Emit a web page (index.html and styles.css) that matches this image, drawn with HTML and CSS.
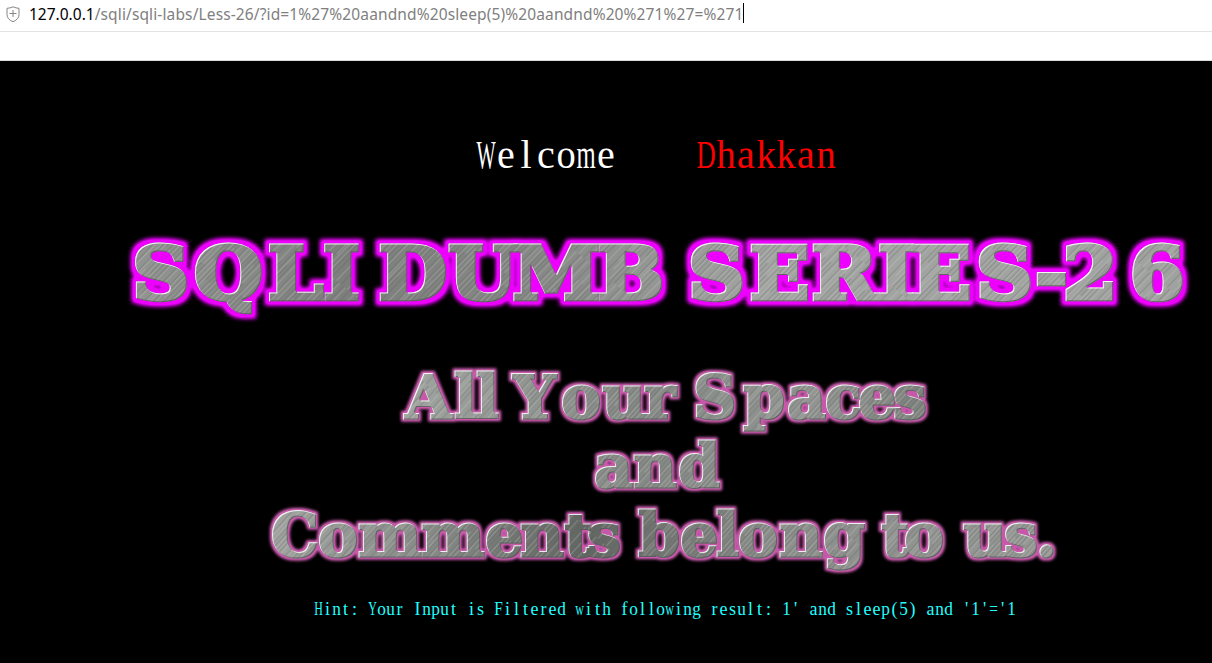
FILE: index.html
```html
<!DOCTYPE html>
<html lang="en">
<head>
<meta charset="utf-8">
<title>Less-26</title>
<link rel="stylesheet" href="styles.css">
</head>
<body>
<header class="address">
  <svg class="shield" viewBox="0 0 14 17" width="14" height="17"><path d="M7 .8 Q10 2.2 13 2.3 V8.5 Q13 13.3 7 15.7 Q1 13.3 1 8.5 V2.3 Q4 2.2 7 .8Z M3.5 7.5 H10.5 M7 4 V11"/></svg>
  <div class="url"><span class="host">127.0.0.1</span><span class="path">/sqli/sqli-labs/Less-26/?id=1%27%20aandnd%20sleep(5)%20aandnd%20%271%27=%271</span></div>
  <i class="caret"></i>
</header>
<div class="toolbar"></div>
<main class="page">
<svg class="art" viewBox="0 61 1212 602" width="1212" height="602">
  <defs>
    <pattern id="scratches" width="31" height="170" patternUnits="userSpaceOnUse" patternTransform="rotate(42) scale(.8 1)">
      <path class="lit" d="M2 0V90M6 40V150M11 0V60M14 80V170M19 20V120M24 0V70M28 60V170M9 110V160"/>
      <path class="dim" d="M4 20V170M8 0V80M12.500 60V140M17 0V110M21 70V170M26 20V130M30 0V60M16 130V170"/>
    </pattern>
    <linearGradient id="steelA" gradientUnits="userSpaceOnUse" x1="125" y1="0" x2="1102" y2="0">
      <stop offset="0" stop-color="#929492"/><stop offset=".2" stop-color="#7d7f7d"/><stop offset=".38" stop-color="#868886"/><stop offset=".6" stop-color="#a3a5a3"/><stop offset="1" stop-color="#a0a2a0"/>
    </linearGradient>
    <linearGradient id="steelB" gradientUnits="userSpaceOnUse" x1="403" y1="0" x2="927" y2="0">
      <stop offset="0" stop-color="#a0a4a0"/><stop offset=".45" stop-color="#858985"/><stop offset=".6" stop-color="#8b8f8b"/><stop offset=".78" stop-color="#929592"/><stop offset="1" stop-color="#7d817d"/>
    </linearGradient>
    <linearGradient id="steelC" gradientUnits="userSpaceOnUse" x1="272" y1="0" x2="1055" y2="0">
      <stop offset="0" stop-color="#a0a3a0"/><stop offset=".2" stop-color="#878b87"/><stop offset=".4" stop-color="#626662"/><stop offset=".65" stop-color="#8b8e8b"/><stop offset="1" stop-color="#959895"/>
    </linearGradient>
    <pattern id="metalA" width="1212" height="663" patternUnits="userSpaceOnUse"><rect width="1212" height="663" fill="url(#steelA)"/><rect width="1212" height="663" fill="url(#scratches)"/></pattern>
    <pattern id="metalB" width="1212" height="663" patternUnits="userSpaceOnUse"><rect width="1212" height="663" fill="url(#steelB)"/><rect width="1212" height="663" fill="url(#scratches)"/></pattern>
    <pattern id="metalC" width="1212" height="663" patternUnits="userSpaceOnUse"><rect width="1212" height="663" fill="url(#steelC)"/><rect width="1212" height="663" fill="url(#scratches)"/></pattern>
    <filter id="neon" filterUnits="userSpaceOnUse" x="100" y="210" width="1112" height="140" color-interpolation-filters="sRGB">
      <feMorphology in="SourceAlpha" operator="dilate" radius="3.500" result="fat"/>
      <feGaussianBlur in="fat" stdDeviation="2.200" result="halo"/>
      <feComponentTransfer in="halo" result="strong"><feFuncA type="linear" slope="1.350"/></feComponentTransfer>
      <feFlood flood-color="#ee00ff"/><feComposite in2="strong" operator="in" result="glow"/>
      <feOffset in="SourceAlpha" dx="1" dy="1" result="down"/><feFlood flood-color="#fff" flood-opacity=".9"/><feComposite in2="SourceAlpha" operator="in"/><feComposite in2="down" operator="out" result="light"/>
      <feOffset in="SourceAlpha" dx="-1" dy="-1" result="up"/><feFlood flood-color="#555" flood-opacity=".8"/><feComposite in2="SourceAlpha" operator="in"/><feComposite in2="up" operator="out" result="shade"/>
      <feMerge><feMergeNode in="glow"/><feMergeNode in="SourceGraphic"/><feMergeNode in="shade"/><feMergeNode in="light"/></feMerge>
    </filter>
    <filter id="rose" filterUnits="userSpaceOnUse" x="240" y="350" width="850" height="240" color-interpolation-filters="sRGB">
      <feMorphology in="SourceAlpha" operator="dilate" radius="2" result="fat"/>
      <feGaussianBlur in="fat" stdDeviation="1.500" result="halo"/>
      <feComponentTransfer in="halo" result="strong"><feFuncA type="linear" slope="1.200"/></feComponentTransfer>
      <feFlood flood-color="#c758aa"/><feComposite in2="strong" operator="in" result="glow"/>
      <feOffset in="SourceAlpha" dx="1" dy="1" result="down"/><feFlood flood-color="#fff" flood-opacity=".85"/><feComposite in2="SourceAlpha" operator="in"/><feComposite in2="down" operator="out" result="light"/>
      <feOffset in="SourceAlpha" dx="-1" dy="-1" result="up"/><feFlood flood-color="#555" flood-opacity=".8"/><feComposite in2="SourceAlpha" operator="in"/><feComposite in2="up" operator="out" result="shade"/>
      <feMerge><feMergeNode in="glow"/><feMergeNode in="SourceGraphic"/><feMergeNode in="shade"/><feMergeNode in="light"/></feMerge>
    </filter>
  </defs>
  <text class="greet" y="168" data-start="476" data-cell="20">Welcome</text>
  <text class="greet name" y="168" data-start="696" data-cell="20">Dhakkan</text>
  <g class="title" filter="url(#neon)">
    <g transform="scale(1.08 1)">
      <text y="299.500" x="122.5 179.600 248 299">SQLI</text>
      <text y="299.500" x="350.500 415 474.500 553">DUMB</text>
      <text y="299.500" x="637 694 751.500 813 843.500 903.700 958.300 984 1046">SERIES-26</text>
    </g>
  </g>
  <g class="motto" filter="url(#rose)">
    <text y="418" x="405 454 476">All</text>
    <text y="418" x="513 561 602 644">Your</text>
    <text y="418" x="693 743 787 825 858 893">Spaces</text>
    <text y="487" x="594 633 678">and</text>
    <g class="last">
      <text y="556" x="271 318 358 421 485 520 564 587">Comments</text>
      <text y="556" x="638 680 716 738 779 823">belong</text>
      <text y="556" x="881 904">to</text>
      <text y="556" x="963 1004 1036">us.</text>
    </g>
  </g>
  <text class="hint" y="615" data-start="314" data-cell="9">Hint: Your Input is Filtered with following result: 1' and sleep(5) and '1'='1</text>
</svg>
</main>
<script src="cells.js"></script>
</body>
</html>
```
FILE: styles.css
```css
body { margin: 0; height: 663px; overflow: hidden; display: flex; flex-direction: column; background: #000; }
.address { box-sizing: border-box; height: 32px; flex: none; display: flex; align-items: flex-start; padding: 3px 0 0 6px; background: #fff; border-bottom: 1px solid #e3e3e3; }
.shield { margin: 3px 9px 0 0; fill: none; stroke: #858585; stroke-width: 1; }
.url { font: 15.5px/22px "Noto Sans", sans-serif; white-space: nowrap; width: 714px; }
.host { color: #000; }
.path { color: #808080; letter-spacing: .125px; }
.caret { width: 1px; height: 20px; background: #000; }
.toolbar { box-sizing: border-box; height: 29px; flex: none; background: #fff; border-bottom: 1px solid #ddd; }
.page { flex: 1; }
.art { display: block; }
.greet { font: 40px "Liberation Serif", serif; fill: #fff; text-anchor: middle; }
.name { fill: #f00; }
.hint { font: 18px "Liberation Serif", serif; fill: #2ff; text-anchor: middle; }
.title { font: bold 73px "DejaVu Serif", serif; fill: url(#metalA); stroke: url(#metalA); stroke-width: 4.5px; }
.motto { font: bold 60px "DejaVu Serif", serif; fill: url(#metalB); stroke: url(#metalB); stroke-width: 3px; }
.last { fill: url(#metalC); stroke: url(#metalC); }
.lit { stroke: #d0d0cb; stroke-width: .7px; opacity: .5; }
.dim { stroke: #555755; stroke-width: .7px; opacity: .5; }
```
FILE: cells.js
```js
// Centre every character in a fixed-width cell; squeeze the ones wider than it.
document.querySelectorAll('text[data-cell]').forEach(function (el) {
  var cell = +el.dataset.cell, start = +el.dataset.start, text = el.textContent;
  el.textContent = '';
  Array.from(text).forEach(function (ch, i) {
    var t = document.createElementNS('http://www.w3.org/2000/svg', 'tspan');
    t.textContent = ch;
    t.setAttribute('x', start + cell * (i + 0.5));
    el.appendChild(t);
    if (t.getComputedTextLength() > cell * 0.97) {
      t.setAttribute('textLength', cell * 0.96);
      t.setAttribute('lengthAdjust', 'spacingAndGlyphs');
    }
  });
});
```
